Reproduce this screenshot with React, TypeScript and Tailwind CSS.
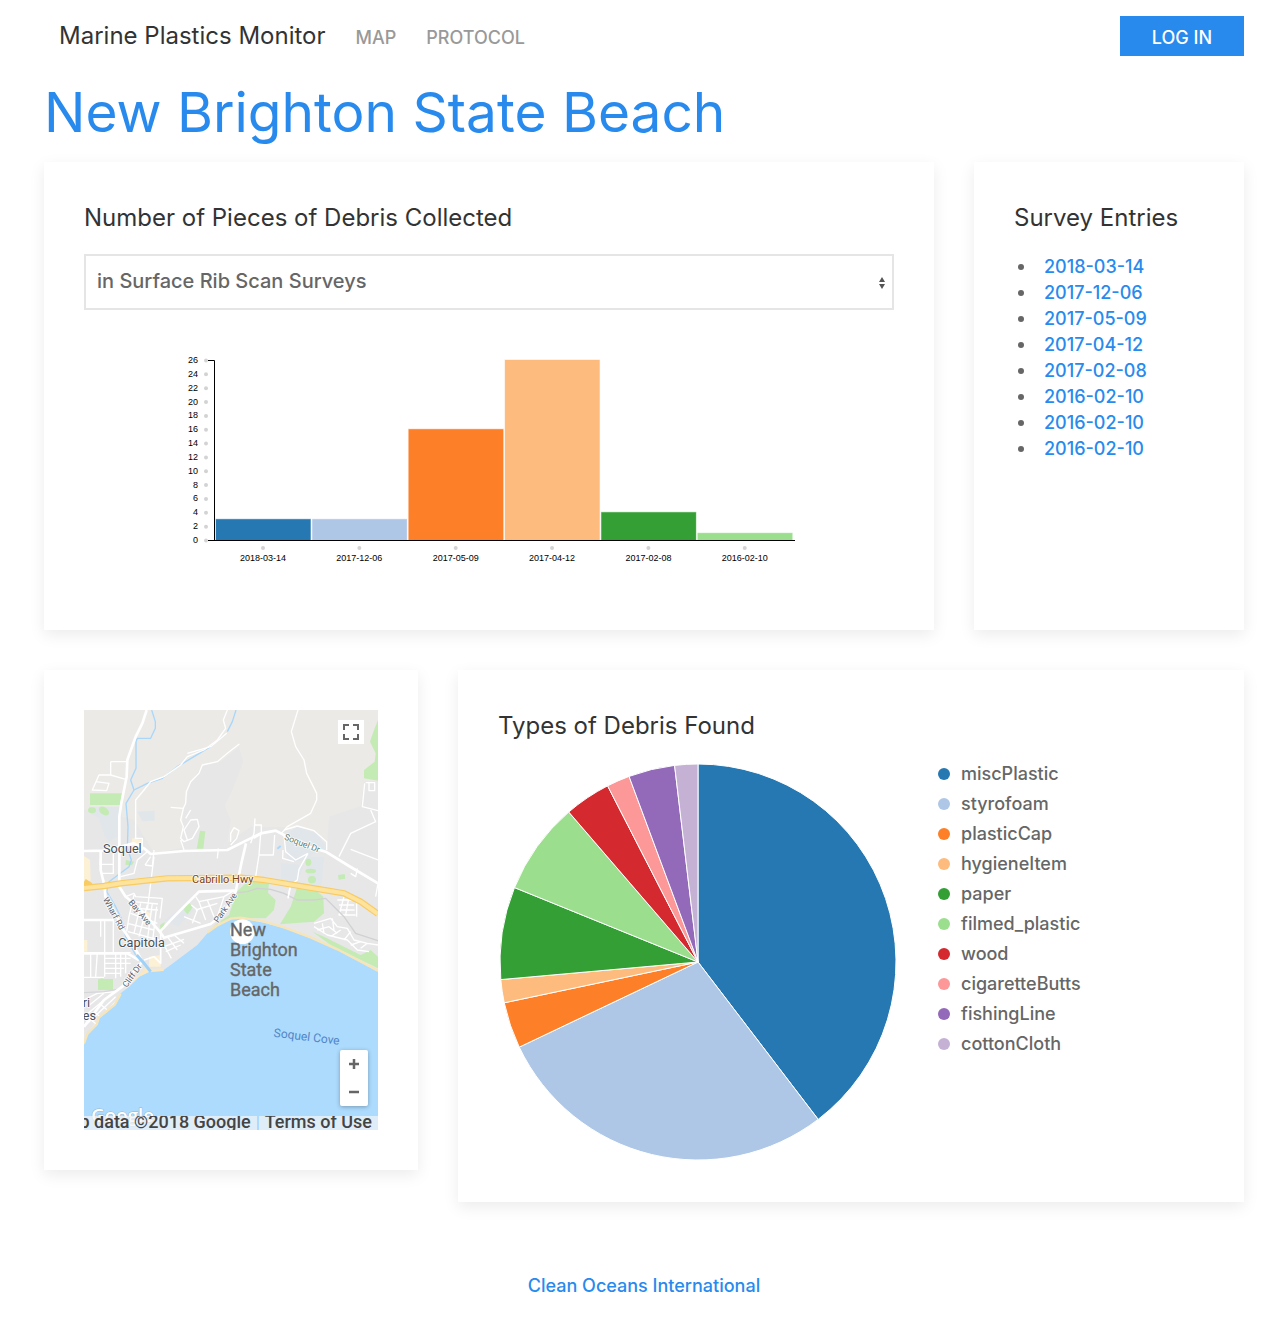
import type { ReactNode } from "react";

const surveys = [
  "2018-03-14",
  "2017-12-06",
  "2017-05-09",
  "2017-04-12",
  "2017-02-08",
  "2016-02-10",
  "2016-02-10",
  "2016-02-10",
];

const bars = [
  { label: "2018-03-14", value: 3, color: "#2678b2" },
  { label: "2017-12-06", value: 3, color: "#afc7e6" },
  { label: "2017-05-09", value: 16, color: "#fd7f28" },
  { label: "2017-04-12", value: 26, color: "#fdbb7e" },
  { label: "2017-02-08", value: 4, color: "#339f34" },
  { label: "2016-02-10", value: 1, color: "#9bdf8e" },
];

const debris = [
  { name: "miscPlastic", count: 21, color: "#2678b2" },
  { name: "styrofoam", count: 15, color: "#afc7e6" },
  { name: "plasticCap", count: 2, color: "#fd7f28" },
  { name: "hygieneItem", count: 1, color: "#fdbb7e" },
  { name: "paper", count: 4, color: "#339f34" },
  { name: "filmed_plastic", count: 4, color: "#9bdf8e" },
  { name: "wood", count: 2, color: "#d42a2f" },
  { name: "cigaretteButts", count: 1, color: "#fc9897" },
  { name: "fishingLine", count: 2, color: "#9369ba" },
  { name: "cottonCloth", count: 1, color: "#c5b1d4" },
];

function Card({ children }: { children: ReactNode }) {
  return (
    <section className="min-w-0 bg-white p-10 shadow-[0_5px_15px_rgba(0,0,0,0.08)]">{children}</section>
  );
}

function CardTitle({ children }: { children: ReactNode }) {
  return <h2 className="mb-5 text-2xl leading-8 text-[#333]">{children}</h2>;
}

function BarChart() {
  const base = 220;
  const unit = 180 / 26;
  const step = 96.35;
  const ticks = Array.from({ length: 14 }, (_, i) => i * 2);
  return (
    <svg viewBox="0 0 810 270" className="mt-[10px] block w-full" role="img" aria-label="Pieces of debris per survey">
      {bars.map((b, i) => (
        <rect
          key={b.label}
          x={132 + i * step}
          y={base - b.value * unit}
          width={94.5}
          height={b.value * unit}
          fill={b.color}
          stroke={b.color}
          strokeOpacity={0.4}
        />
      ))}
      <path d="M124 40.5H130.5V220.5H124M130 220.5H711" fill="none" stroke="#000" />
      <g fontFamily="Liberation Sans, Arial, sans-serif" fontSize="9" fill="#000">
        {ticks.map((t) => (
          <g key={t}>
            <circle cx="122" cy={base + 0.5 - t * unit} r="2" fill="#d3d3d3" />
            <text x="114" y={base + 3 - t * unit} textAnchor="end">
              {t}
            </text>
          </g>
        ))}
        {bars.map((b, i) => (
          <g key={b.label}>
            <circle cx={179 + i * step} cy="228" r="2" fill="#d3d3d3" />
            <text x={179 + i * step} y="241" textAnchor="middle">
              {b.label}
            </text>
          </g>
        ))}
      </g>
    </svg>
  );
}

function PieChart() {
  const total = debris.reduce((s, d) => s + d.count, 0);
  const point = (n: number) => {
    const a = (n / total) * Math.PI * 2;
    return `${200 + 198 * Math.sin(a)} ${200 - 198 * Math.cos(a)}`;
  };
  let run = 0;
  return (
    <svg viewBox="0 0 400 400" className="block w-full max-w-[400px]" role="img" aria-label="Types of debris found">
      {debris.map((d) => {
        const from = point(run);
        run += d.count;
        const to = point(run);
        const large = d.count / total > 0.5 ? 1 : 0;
        return (
          <path key={d.name} d={`M200 200L${from}A198 198 0 ${large} 1 ${to}Z`} fill={d.color} stroke="#fff" strokeWidth="1" />
        );
      })}
    </svg>
  );
}

function MapDrawing() {
  return (
    <svg viewBox="0 0 882 1260" preserveAspectRatio="xMidYMid slice" className="block h-[420px] w-full" role="img" aria-label="Map of Soquel Cove">
      <rect width="882" height="1260" fill="#ebeae7" />
      {/* built-up land */}
      <path
        d="M0 300L110 290L115 320L150 330L210 430L290 415L300 300L320 215L355 165L410 155L465 110L478 155L445 240L422 288L440 330L430 400L500 350L600 352L730 400L735 320L830 288L840 215L882 212V840H0Z"
        fill="#e7e7e8"
      />
      <path d="M0 690H450V1010H0Z" fill="#e7e7e8" />
      <g fill="#e1e6ea">
        <path d="M15 290H108V375L75 395L60 375L45 325L20 310Z" />
        <path d="M160 305L212 302V332L175 334Z" />
        <path d="M600 375L640 350L700 370L730 415L690 430L665 450L610 455Z" />
        <path d="M590 460L660 465L640 520L592 520Z" />
        <path d="M665 440H720L712 530L672 520Z" />
        <path d="M240 630L300 590L330 600L280 650Z" />
      </g>
      {/* parks */}
      <g fill="#c5ebb5">
        <path d="M18 250H114L108 285H18Z" />
        <ellipse cx="24" cy="301" rx="12" ry="9" />
        <ellipse cx="60" cy="303" rx="17" ry="11" transform="rotate(35 60 303)" />
        <path d="M882 30L868 65L858 95L875 130L872 155L840 180V205L882 212Z" />
        <path d="M348 362L364 364L358 416L338 416Z" />
        <path d="M126 450L150 455L144 466L124 464Z" />
        <ellipse cx="673" cy="457" rx="9" ry="11" />
        <ellipse cx="680" cy="483" rx="16" ry="7" />
        <ellipse cx="684" cy="509" rx="12" ry="11" />
        <path d="M762 495L782 492L784 506L764 509Z" />
        <path d="M311 575L327 590L311 613L299 600Z" />
        <path d="M228 645L242 636L240 660L230 665Z" />
        <path d="M42 808L55 805L58 807H87V840H42Z" />
        <path d="M435 615L458 545L490 515L555 518L552 548L575 570L570 600L545 625L440 625L385 650Z" />
        <path d="M640 530L700 545L718 560L720 610L690 635L588 643L620 590Z" />
        <path d="M685 665L720 680L780 710L830 735L860 720L882 740V775L820 745L740 705Z" />
      </g>
      {/* sand patches */}
      <g fill="#fdf1d5">
        <path d="M0 438L18 450L20 510L0 525Z" />
        <path d="M175 600L200 610V640L178 645Z" />
        <path d="M0 690H10V725H0Z" />
        <path d="M145 385L175 390V410H140Z" />
        <path d="M195 740L230 735V770H195Z" />
      </g>
      {/* streams */}
      <g fill="none" stroke="#a9d7fb" strokeWidth="4" strokeLinejoin="round">
        <path d="M203 0L214 35V55L200 85L160 85L156 95V175L140 210L150 240L126 280L132 350L130 415L142 450L135 470L75 515L68 545L95 590L112 625L125 680L155 735" />
        <path d="M456 0L445 35L430 65M384 107L330 140L280 170L235 205L190 220L150 240" />
        <path d="M580 416L590 408" strokeWidth="6" />
      </g>
      {/* local streets */}
      <g fill="none" stroke="#fff" strokeWidth="4" strokeLinejoin="round">
        <path d="M430 0L418 30L425 55L400 90L360 120L310 140L290 165L240 200L200 215L180 240L155 270V385" />
        <path d="M428 70L380 110L310 130" />
        <path d="M80 155H130M80 155V195L45 195L25 240L68 242L75 220L35 215M80 195L125 208" />
        <path d="M466 102L430 130L400 155L355 165L345 190L320 215L307 245L305 280L298 295L260 292M298 295L290 330L298 350L290 385L300 395L325 385L345 350L340 328L320 330L300 360L310 390M305 325L320 300M290 390L300 420" />
        <path d="M642 0L622 65L635 110L660 150L668 190L698 250V270L680 310L610 350L592 370" />
        <path d="M440 395V370L450 353L465 362L458 385L440 405M403 415L400 445M513 325L510 370L500 400M510 345H532V372L510 385M530 370L525 435H568L572 375M525 435L515 500" />
        <path d="M600 375L605 425L635 450L672 430M597 420L596 445L630 455M672 430L645 478L640 510L620 525L612 560M600 360L640 348L690 362L728 395V420" />
        <path d="M845 218H872V242H855V215M842 220L835 290L882 302M860 300L875 335L800 370L765 440M800 418L882 450M820 475L815 500L800 490" />
        <path d="M147 420H175V385H152M52 425L48 463H88V490H55M88 425V463M190 425L160 450L150 490L110 500M183 465L205 468L210 420M210 440L190 600M183 465L200 440" />
        <path d="M125 560L150 550L155 560L235 565L228 625M150 575L222 582M160 595L222 600M150 555L135 620L128 665M170 580L150 670M190 585L165 680M205 580L190 690M218 590L205 700M140 610L220 640M130 640L210 660M132 665L225 690" />
        <path d="M335 560L345 575L420 560L400 620M322 585L340 600L325 640M345 575L365 630M370 570L390 620M335 600L400 580M300 620L350 640M420 560L445 545" />
        <path d="M50 630V680M0 728H140M62 628V800M88 628V730M20 728V800M40 728L35 800M62 745H140M62 760H140M62 775H120M62 790H110M95 728V805M110 728V800M125 730V790M0 802H60" />
        <path d="M232 690L262 745M250 680L280 720M270 675L300 700M240 710L300 688M245 725L290 705" />
        <path d="M0 870L40 850L95 845M10 890L60 850M0 920L85 850M0 950L95 860M20 960L100 870M30 905L60 930M15 925L40 945M45 880L70 900" />
        <path d="M760 570H815M765 585H810M770 600H812M780 560L765 615L815 615M795 560L785 615M818 560V620M882 520L875 560" />
        <path d="M690 640L740 625L760 650L790 655L810 690L850 700L882 705M700 660L735 650L760 670M690 650L730 675L790 690L820 720L855 725M740 680L770 660M780 690L800 665M800 705L830 695M745 625L750 660M715 640L720 670M830 715L850 700" />
      </g>
      <path d="M458 548L490 545L520 535L560 538L600 550L640 570L690 570L725 565L780 620L815 670L882 692" fill="none" stroke="#d0d1d3" strokeWidth="4" />
      <path d="M0 848L60 845L100 838" fill="none" stroke="#d5d6d8" strokeWidth="4" />
      {/* main roads */}
      <g fill="none" stroke="#fff" strokeWidth="8" strokeLinejoin="round">
        <path d="M188 0L175 40L155 80L130 150L128 200L112 280L106 320V530L125 560L150 580L180 610L230 668" />
        <path d="M0 423L60 422L150 400L180 415L200 432L300 423L430 420L480 395L530 370L575 362L600 375L640 400L725 425L790 465L882 520" />
        <path d="M50 425V480L62 530L64 560L95 610L112 650L145 700L175 755" />
        <path d="M486 400L472 460L455 545L420 610L380 642L240 683L228 665L265 625L300 590L345 545L452 542" />
        <path d="M0 630H88M0 730H130L165 750M175 755L145 790L115 830L60 870L0 950" />
        <path d="M620 525L612 565M230 670V760L210 740L180 750" strokeWidth="5" />
      </g>
      {/* highway */}
      <g fill="none" strokeLinejoin="round">
        <path d="M0 515L20 528M0 534L60 528L110 520L250 505L470 503L540 510L660 530L780 550L830 575L882 612" stroke="#f8cb63" strokeWidth="19" />
        <path d="M0 534L60 528L110 520L250 505L470 503L540 510L660 530L780 550L830 575L882 612" stroke="#fee39d" strokeWidth="12" />
      </g>
      {/* bay and beaches */}
      <path
        d="M0 1005L10 975L40 945L45 925L95 885L110 850L135 830L165 800L195 785L235 783L260 765L300 735L340 705L370 670L400 648L440 628L470 625L540 638L600 655L680 685L760 720L820 752L882 785V1260H0Z"
        fill="#acdbfe"
      />
      <path d="M0 1000L10 972L38 943L45 922L92 884L110 852M370 668L400 646L440 626L470 623L540 634L600 652L680 682L760 718L820 749L882 782" fill="none" stroke="#f7e5b8" strokeWidth="7" />
      <path d="M135 830L165 795L185 770L205 778L235 775L240 783L195 786L165 800Z" fill="#fbe8c0" />
      <path d="M158 735L180 760L200 785" stroke="#a0d2f8" strokeWidth="9" fill="none" />
      {/* place names */}
      <g fontFamily="Roboto, sans-serif" stroke="#fff" strokeWidth="5" strokeOpacity="0.8" paintOrder="stroke">
        <g fill="#4a4f57" fontSize="38">
          <text x="57" y="430">Soquel</text>
          <text x="103" y="710">Capitola</text>
          <text x="-4" y="890">ri</text>
          <text x="-4" y="930">es</text>
        </g>
        <text x="324" y="519" fontSize="33" fill="#7d4318">Cabrillo Hwy</text>
        <g fill="#5e666d" fontSize="26">
          <text transform="translate(599 388) rotate(21)" fill="#5b7f79">Soquel Dr</text>
          <text transform="translate(56 568) rotate(61)">Wharf Rd</text>
          <text transform="translate(132 578) rotate(50)">Bay Ave</text>
          <text transform="translate(403 640) rotate(-56)">Park Ave</text>
          <text transform="translate(128 834) rotate(-54)">Cliff Dr</text>
        </g>
      </g>
      <text transform="translate(568 980) rotate(7)" fontFamily="Roboto, sans-serif" fontSize="36" fill="#5286c6">
        Soquel Cove
      </text>
      {/* beach marker */}
      <circle cx="475" cy="665" r="37" fill="#fff" />
      <g fontFamily="Roboto, sans-serif" fontSize="54" fill="#666" stroke="#666" strokeWidth="1">
        <text x="438" y="678">New</text>
        <text x="438" y="738">Brighton</text>
        <text x="438" y="798">State</text>
        <text x="438" y="858">Beach</text>
      </g>
      <text x="22" y="1236" fontFamily="Open Sans, sans-serif" fontSize="56" fontWeight="600" fill="#fff" stroke="#9ab4c8" strokeWidth="3" paintOrder="stroke">
        Google
      </text>
    </svg>
  );
}

function BeachMap() {
  return (
    <div className="relative overflow-hidden font-[Roboto,sans-serif]">
      <MapDrawing />
      <button type="button" aria-label="Toggle fullscreen" className="absolute top-[10px] right-[14px] flex h-6 w-[26px] items-center justify-center bg-white">
        <svg viewBox="0 0 16 16" className="size-4" fill="none" stroke="#666" strokeWidth="2">
          <path d="M1 6V1H6M10 1H15V6M15 10V15H10M6 15H1V10" />
        </svg>
      </button>
      <div className="absolute right-[10px] bottom-6 flex w-7 flex-col rounded-xs bg-white shadow-[0_1px_4px_rgba(0,0,0,0.3)]">
        <button type="button" aria-label="Zoom in" className="flex h-7 items-center justify-center">
          <svg viewBox="0 0 10 10" className="size-[10px]" stroke="#666" strokeWidth="2.5">
            <path d="M5 0V10M0 5H10" />
          </svg>
        </button>
        <button type="button" aria-label="Zoom out" className="flex h-7 items-center justify-center">
          <svg viewBox="0 0 10 10" className="size-[10px]" stroke="#666" strokeWidth="2.5">
            <path d="M0 5H10" />
          </svg>
        </button>
      </div>
      <div className="absolute inset-x-0 bottom-0 flex h-[14px] justify-end gap-[2px] overflow-hidden text-lg leading-3 font-medium whitespace-nowrap text-[#444]">
        <span className="h-full shrink-0 bg-[#f5f5f5]/70 px-[6px]">Map data ©2018 Google</span>
        <a href="#terms" className="h-full shrink-0 bg-[#f5f5f5]/70 px-[6px]">
          Terms of Use
        </a>
      </div>
    </div>
  );
}

export default function App() {
  return (
    <div className="bg-white pr-[34px] pl-11 font-[Inter,sans-serif] text-lg text-[#666]">
      <header className="flex items-center justify-between py-4">
        <nav className="flex items-baseline gap-[30px] pl-[15px] font-medium text-[#999]">
          <a href="#home" className="text-2xl leading-10 font-normal text-[#333]">
            Marine Plastics Monitor
          </a>
          <a href="#map">MAP</a>
          <a href="#protocol">PROTOCOL</a>
        </nav>
        <button type="button" className="h-10 bg-[#288aed] px-8 pt-1 font-medium text-white">
          LOG IN
        </button>
      </header>

      <main>
        <h1 className="mb-[10px] text-[55px] leading-[80px] text-[#288aed]">New Brighton State Beach</h1>

        <div className="grid grid-cols-[89fr_27fr] gap-10">
          <Card>
            <CardTitle>Number of Pieces of Debris Collected</CardTitle>
            <div className="relative">
              <select
                aria-label="Survey type"
                className="h-14 w-full appearance-none border-2 border-[#e5e5e5] bg-white pr-8 pb-0.5 pl-[11px] text-xl font-medium text-[#666]"
              >
                <option>in Surface Rib Scan Surveys</option>
              </select>
              <svg viewBox="0 0 6 12" className="pointer-events-none absolute top-[23px] right-[9px] h-3 w-[6px]" fill="#555">
                <path d="M3 0L6 5H0ZM3 12L0 7H6Z" />
              </svg>
            </div>
            <BarChart />
          </Card>
          <Card>
            <CardTitle>Survey Entries</CardTitle>
            <ul>
              {surveys.map((date, i) => (
                <li key={i} className="flex items-center leading-[26px] font-medium">
                  <span className="mr-5 ml-1 size-[6px] rounded-full bg-[#666]" />
                  <a href="#survey" className="text-[#288aed]">
                    {date}
                  </a>
                </li>
              ))}
            </ul>
          </Card>
        </div>

        <div className="mt-10 grid grid-cols-[374fr_786fr] items-start gap-10">
          <Card>
            <BeachMap />
          </Card>
          <Card>
            <CardTitle>Types of Debris Found</CardTitle>
            <div className="flex gap-10">
              <PieChart />
              <ul className="flex flex-col gap-[6px] leading-6 font-medium">
                {debris.map((d) => (
                  <li key={d.name} className="flex items-center gap-[11px]">
                    <span className="size-3 rounded-full" style={{ backgroundColor: d.color }} />
                    {d.name}
                  </li>
                ))}
              </ul>
            </div>
          </Card>
        </div>
      </main>

      <footer className="pt-[70px] pb-6 text-center font-medium">
        <a href="#coi" className="text-[#288aed]">
          Clean Oceans International
        </a>
      </footer>
    </div>
  );
}
